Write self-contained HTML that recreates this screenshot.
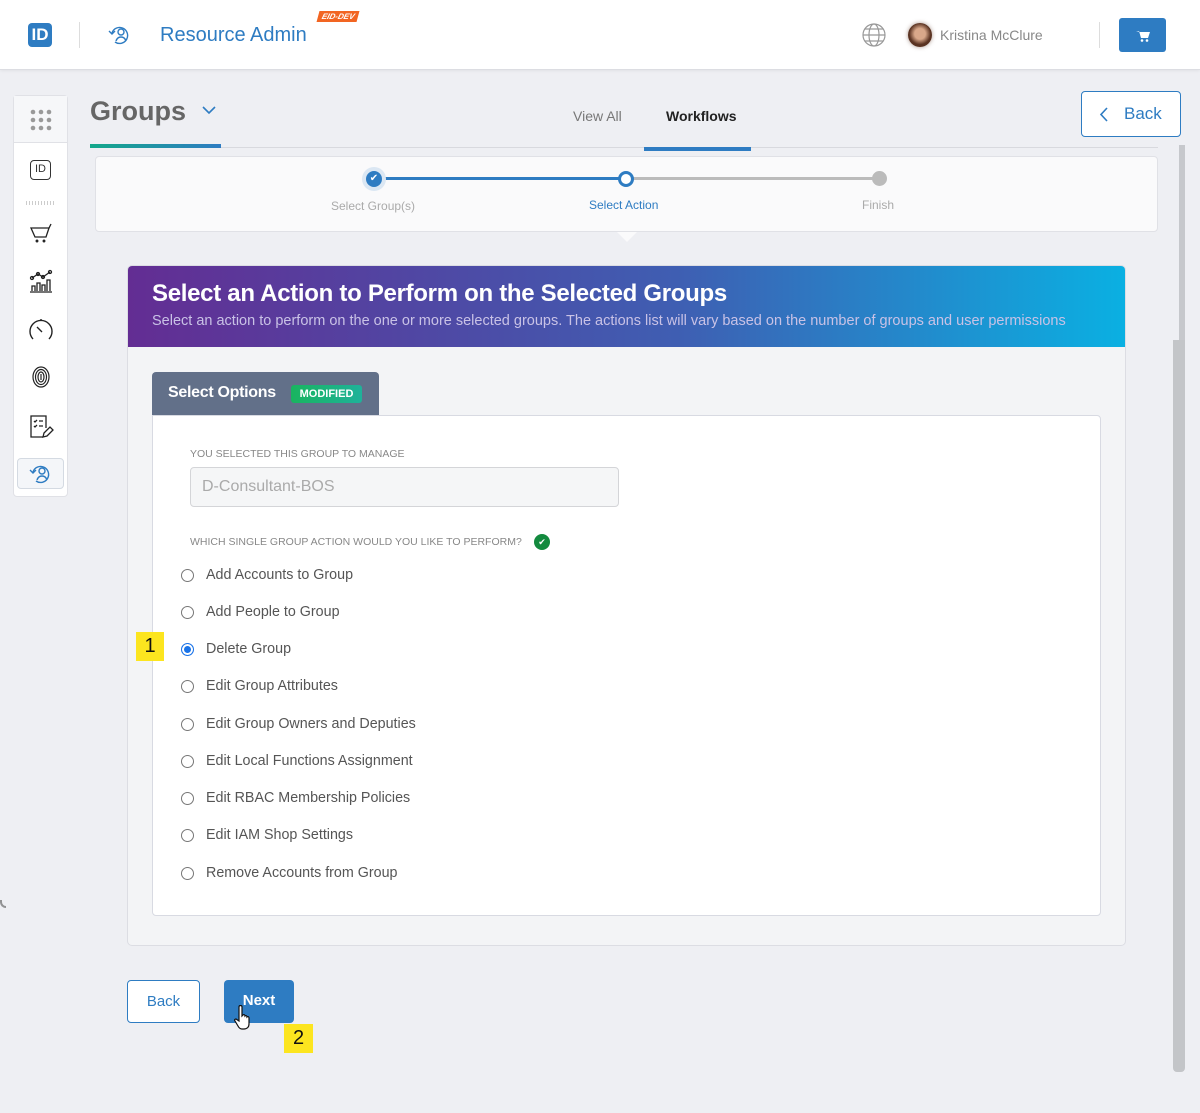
<!DOCTYPE html>
<html><head><meta charset="utf-8"><style>
*{box-sizing:border-box;margin:0;padding:0}
body{width:1200px;height:1113px;background:#eeeff3;font-family:"Liberation Sans",sans-serif;position:relative;overflow:hidden;color:#444}
.abs{position:absolute}
.hdr{left:0;top:0;width:1200px;height:70px;background:#fff;border-bottom:1px solid #dcdde2;box-shadow:0 1px 3px rgba(0,0,0,.06)}
.radio{position:absolute;left:181px;width:13px;height:13px;border:1px solid #777;border-radius:50%;background:#fff}
.opt{position:absolute;left:206px;font-size:14.3px;color:#555}
</style></head><body>
<div class="abs hdr">
  <div class="abs" style="left:28px;top:23px;width:24px;height:24px;background:#2e7cc2;border-radius:4px;color:#fff;font-weight:bold;font-size:17px;line-height:24px;text-align:center">ID</div>
  <div class="abs" style="left:79px;top:22px;width:1px;height:26px;background:#ddd"></div>
  <svg class="abs" style="left:107px;top:23px" width="26" height="24" viewBox="0 0 26 24" fill="none" stroke="#2e7cc2" stroke-width="1.4"><path d="M5 10a8 8 0 1 1 3 9"/><path d="M2 8l3 3 3-3"/><circle cx="14" cy="9" r="3"/><path d="M9 18c1-3 3-4 5-4s4 1 5 4"/></svg>
  <div class="abs" style="left:160px;top:24px;font-size:20px;color:#2e7cc2">Resource Admin</div>
  <div class="abs" style="left:318px;top:11px;background:#f26522;color:#fff;font-size:8px;font-weight:bold;font-style:italic;padding:1px 4px;transform:skewX(-15deg)">EID-DEV</div>
  <svg class="abs" style="left:862px;top:23px" width="24" height="24" viewBox="0 0 24 24" fill="none" stroke="#999" stroke-width="1.2"><circle cx="12" cy="12" r="11"/><ellipse cx="12" cy="12" rx="5" ry="11"/><path d="M1 12h22M3 6h18M3 18h18"/></svg>
  <div class="abs" style="left:908px;top:23px;width:24px;height:24px;border-radius:50%;background:radial-gradient(circle at 50% 45%,#d9a88a 30%,#5a3322 60%);box-shadow:0 0 4px rgba(90,50,30,.5)"></div>
  <div class="abs" style="left:940px;top:27px;font-size:14px;color:#888">Kristina McClure</div>
  <div class="abs" style="left:1099px;top:22px;width:1px;height:26px;background:#ddd"></div>
  <div class="abs" style="left:1119px;top:18px;width:47px;height:34px;background:#2e7cc2;border-radius:3px;color:#fff;text-align:center;line-height:34px;font-size:13px">
    <svg width="14" height="12" viewBox="0 0 14 12" style="vertical-align:middle"><path d="M0 1h3l2 7h7l2-6H4" fill="#fff"/><circle cx="6" cy="10.5" r="1.3" fill="#fff"/><circle cx="11" cy="10.5" r="1.3" fill="#fff"/></svg></div>
</div>
<!-- sidebar -->
<div class="abs" style="left:13px;top:95px;width:55px;height:402px;background:#fff;border:1px solid #e0e1e6;border-radius:4px">
  <div style="height:47px;background:#f6f7f9;border-bottom:1px solid #e0e1e6;position:relative">
    <svg class="abs" style="left:16px;top:13px" width="22" height="22"><g fill="#999"><circle cx="3" cy="3" r="2.3"/><circle cx="11" cy="3" r="2.3"/><circle cx="19" cy="3" r="2.3"/><circle cx="3" cy="11" r="2.3"/><circle cx="11" cy="11" r="2.3"/><circle cx="19" cy="11" r="2.3"/><circle cx="3" cy="19" r="2.3"/><circle cx="11" cy="19" r="2.3"/><circle cx="19" cy="19" r="2.3"/></g></svg>
  </div>
  <div class="abs" style="left:16px;top:64px;width:21px;height:20px;border:1.5px solid #333;border-radius:4px;font-size:11px;line-height:17px;text-align:center;color:#333">ID</div>
  <div class="abs" style="left:12px;top:105px;width:29px;height:4px;background:repeating-linear-gradient(90deg,#ccc 0 1px,transparent 1px 3px)"></div>
  <svg class="abs" style="left:14px;top:126px" width="26" height="24" fill="none" stroke="#222" stroke-width="1.3"><path d="M3 6h18l-3 9H7z"/><path d="M21 6l2-4"/><circle cx="9" cy="19" r=".8"/><circle cx="16" cy="19" r=".8"/></svg>
  <svg class="abs" style="left:14px;top:172px" width="26" height="26" fill="none" stroke="#222" stroke-width="1.3"><path d="M2 24h22M4 23v-5h3v5M9 23v-8h3v8M14 23v-6h3v6M19 23v-11h3v11M4 10l6-4 5 3 7-5"/><circle cx="4" cy="10" r="1.5"/><circle cx="10" cy="6" r="1.5"/><circle cx="15" cy="9" r="1.5"/><circle cx="22" cy="4" r="1.5"/></svg>
  <svg class="abs" style="left:14px;top:222px" width="26" height="24" fill="none" stroke="#222" stroke-width="1.4"><path d="M5 21A11 11 0 1 1 21 21"/><path d="M9 9l5 5M13 1v2"/></svg>
  <svg class="abs" style="left:17px;top:269px" width="20" height="24" fill="none" stroke="#222" stroke-width="1.2"><ellipse cx="10" cy="12" rx="8" ry="10"/><ellipse cx="10" cy="12" rx="5.5" ry="7.5"/><ellipse cx="10" cy="12" rx="3" ry="5"/><path d="M10 9v6"/></svg>
  <svg class="abs" style="left:15px;top:318px" width="26" height="26" fill="none" stroke="#222" stroke-width="1.3"><path d="M17 14V2H2v21h12M5 7l1 1 2-2M10 7h4M5 12l1 1 2-2M10 12h4"/><path d="M14 23l1-4 6-6 3 3-6 6z"/></svg>
  <div class="abs" style="left:3px;top:362px;width:47px;height:31px;background:#f4f6f9;border:1px solid #d4dae2;border-radius:4px">
    <svg class="abs" style="left:10px;top:3px" width="26" height="24" fill="none" stroke="#2e7cc2" stroke-width="1.4"><path d="M5 10a8 8 0 1 1 3 9"/><path d="M2 8l3 3 3-3"/><circle cx="14" cy="9" r="3"/><path d="M9 18c1-3 3-4 5-4s4 1 5 4"/></svg>
  </div>
</div>
<div class="abs" style="left:0;top:900px;width:6px;height:8px;border-left:2px solid #555;border-bottom:2px solid #555;border-radius:0 0 0 6px;opacity:.6"></div>
<!-- title row -->
<div class="abs" style="left:90px;top:96px;font-size:27px;font-weight:bold;color:#666">Groups</div>
<svg class="abs" style="left:202px;top:106px" width="14" height="9" fill="none" stroke="#2e7cc2" stroke-width="1.6"><path d="M1 1l6 6 6-6"/></svg>
<div class="abs" style="left:90px;top:147px;width:1068px;height:1px;background:#d8d9de"></div>
<div class="abs" style="left:90px;top:144px;width:131px;height:4px;background:linear-gradient(90deg,#13a88a,#2e7cc2)"></div>
<div class="abs" style="left:573px;top:108px;font-size:14px;color:#777">View All</div>
<div class="abs" style="left:666px;top:108px;font-size:14px;color:#222;font-weight:bold">Workflows</div>
<div class="abs" style="left:644px;top:147px;width:107px;height:4px;background:#2e7cc2"></div>
<div class="abs" style="left:1081px;top:91px;width:100px;height:46px;border:1px solid #2e7cc2;border-radius:4px;background:#fff;color:#2e7cc2;font-size:17px">
  <svg class="abs" style="left:17px;top:15px" width="9" height="15" fill="none" stroke="#2e7cc2" stroke-width="1.6"><path d="M8 1L2 7.5 8 14"/></svg>
  <span class="abs" style="left:42px;top:12px">Back</span></div>
<!-- scrollbar -->
<div class="abs" style="left:1179px;top:145px;width:6px;height:200px;background:#c6c8cc"></div>
<div class="abs" style="left:1173px;top:340px;width:12px;height:732px;background:#c3c5c8;border-radius:0 0 4px 4px"></div>
<!-- stepper -->
<div class="abs" style="left:95px;top:156px;width:1063px;height:76px;background:#fafafb;border:1px solid #e0e1e6;border-radius:4px"></div>
<div class="abs" style="left:374px;top:177px;width:252px;height:3px;background:#2e7cc2"></div>
<div class="abs" style="left:626px;top:177px;width:253px;height:3px;background:#bbb"></div>
<div class="abs" style="left:362px;top:167px;width:24px;height:24px;border-radius:50%;background:#dbe7f3"></div>
<div class="abs" style="left:366px;top:171px;width:16px;height:16px;border-radius:50%;background:#2e7cc2;color:#fff;font-size:10px;text-align:center;line-height:16px">✔</div>
<div class="abs" style="left:618px;top:171px;width:16px;height:16px;border-radius:50%;background:#fff;border:3px solid #2e7cc2"></div>
<div class="abs" style="left:872px;top:171px;width:15px;height:15px;border-radius:50%;background:#bbb"></div>
<div class="abs" style="left:331px;top:199px;font-size:12px;color:#aaa">Select Group(s)</div>
<div class="abs" style="left:589px;top:198px;font-size:12px;color:#2e7cc2">Select Action</div>
<div class="abs" style="left:862px;top:198px;font-size:12px;color:#aaa">Finish</div>
<div class="abs" style="left:617px;top:232px;width:0;height:0;border-left:10px solid transparent;border-right:10px solid transparent;border-top:10px solid #fafafb"></div>
<!-- main card -->
<div class="abs" style="left:127px;top:265px;width:999px;height:681px;background:#f3f4f6;border:1px solid #dcdde3;border-radius:5px;overflow:hidden">
  <div style="height:81px;background:linear-gradient(90deg,#632d93,#3f5eb2 55%,#0ab0e2);position:relative">
    <div class="abs" style="left:24px;top:14px;font-size:24px;font-weight:bold;color:#fff;letter-spacing:-.3px">Select an Action to Perform on the Selected Groups</div>
    <div class="abs" style="left:24px;top:47px;font-size:14.5px;color:#c9c2e6">Select an action to perform on the one or more selected groups. The actions list will vary based on the number of groups and user permissions</div>
  </div>
</div>
<div class="abs" style="left:152px;top:372px;width:227px;height:43px;background:#627089;border-radius:4px 4px 0 0"></div>
<div class="abs" style="left:168px;top:384px;font-size:16px;font-weight:bold;color:#fff;letter-spacing:-.3px">Select Options</div>
<div class="abs" style="left:291px;top:385px;width:71px;height:18px;background:linear-gradient(90deg,#19b45f,#1fb29a);border-radius:3px;color:#fff;font-size:11px;font-weight:bold;text-align:center;line-height:18px">MODIFIED</div>
<div class="abs" style="left:152px;top:415px;width:949px;height:501px;background:#fff;border:1px solid #d8dae2;border-radius:0 4px 4px 4px"></div>
<div class="abs" style="left:190px;top:448px;font-size:10.5px;color:#888">YOU SELECTED THIS GROUP TO MANAGE</div>
<div class="abs" style="left:190px;top:467px;width:429px;height:40px;background:#f5f6f7;border:1px solid #d4d5d8;border-radius:4px;font-size:16px;color:#aaa;padding:10px 0 0 11px">D-Consultant-BOS</div>
<div class="abs" style="left:190px;top:536px;font-size:10.5px;color:#888">WHICH SINGLE GROUP ACTION WOULD YOU LIKE TO PERFORM?</div>
<div class="abs" style="left:534px;top:534px;width:16px;height:16px;border-radius:50%;background:#138a3e;color:#fff;font-size:9px;text-align:center;line-height:16px">✔</div>
<div class="radio" style="top:569px"></div><div class="opt" style="top:567px">Add Accounts to Group</div>
<div class="radio" style="top:606px"></div><div class="opt" style="top:604px">Add People to Group</div>
<div class="radio" style="top:643px;border-color:#1a73e8;box-shadow:inset 0 0 0 2px #fff;background:#1a73e8"></div><div class="opt" style="top:641px">Delete Group</div>
<div class="radio" style="top:680px"></div><div class="opt" style="top:678px">Edit Group Attributes</div>
<div class="radio" style="top:718px"></div><div class="opt" style="top:716px">Edit Group Owners and Deputies</div>
<div class="radio" style="top:755px"></div><div class="opt" style="top:753px">Edit Local Functions Assignment</div>
<div class="radio" style="top:792px"></div><div class="opt" style="top:790px">Edit RBAC Membership Policies</div>
<div class="radio" style="top:829px"></div><div class="opt" style="top:827px">Edit IAM Shop Settings</div>
<div class="radio" style="top:867px"></div><div class="opt" style="top:865px">Remove Accounts from Group</div>
<div class="abs" style="left:136px;top:632px;width:28px;height:29px;background:#fce51f;font-size:20px;color:#111;text-align:center;line-height:29px">1</div>
<!-- buttons -->
<div class="abs" style="left:127px;top:980px;width:73px;height:43px;background:#fff;border:1px solid #2e7cc2;border-radius:4px;color:#2e7cc2;font-size:15px;text-align:center;line-height:41px">Back</div>
<div class="abs" style="left:224px;top:980px;width:70px;height:43px;background:#2e7cc2;border-radius:4px;color:#fff;font-size:15px;font-weight:bold;text-align:center;line-height:41px">Next</div>
<svg class="abs" style="left:234px;top:1005px" width="18" height="26"><path d="M5 2c0-2 3-2 3 0v9l1-1c1-1 2 0 2 1 1-1 2 0 2 1 1-1 2 0 2 1v6c0 3-2 5-5 5H8c-2 0-3-1-4-3l-3-5c-1-1 0-2 1-2l3 2z" fill="#fff" stroke="#111" stroke-width="1.2"/></svg>
<div class="abs" style="left:284px;top:1024px;width:29px;height:29px;background:#fce51f;font-size:20px;color:#111;text-align:center;line-height:29px">2</div>
</body></html>
